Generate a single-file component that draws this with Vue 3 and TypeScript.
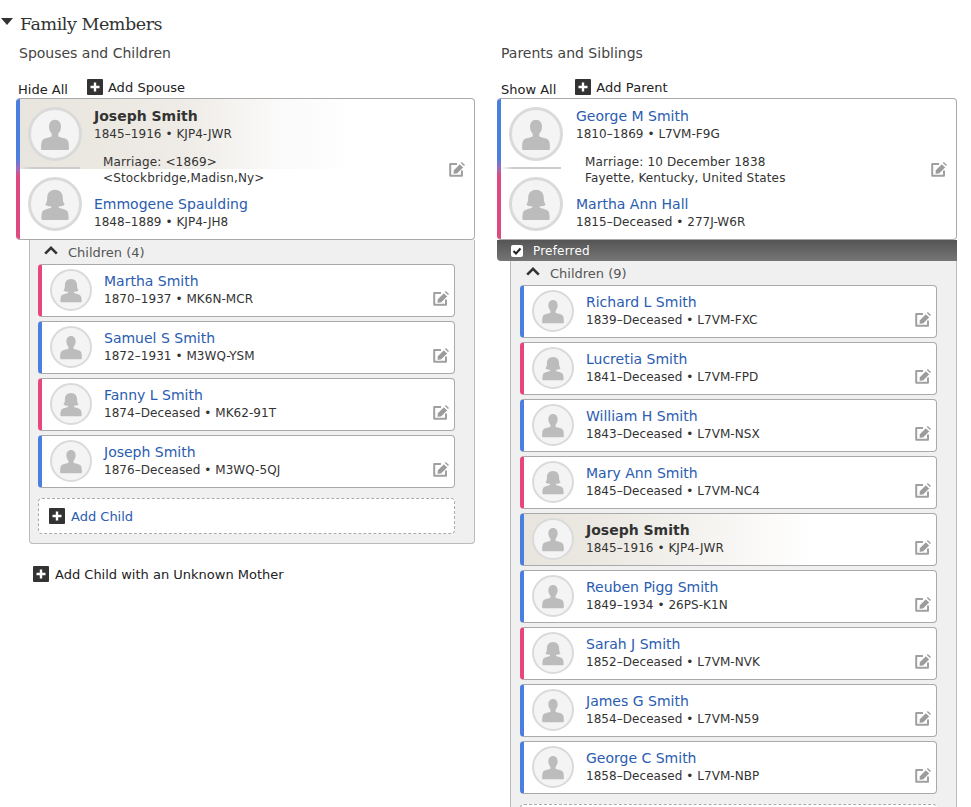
<script setup lang="ts">
interface Kid { name: string; info: string; sex: 'm' | 'f'; self?: boolean }
const leftKids: Kid[] = [
  { name: 'Martha Smith', info: '1870–1937 • MK6N-MCR', sex: 'f' },
  { name: 'Samuel S Smith', info: '1872–1931 • M3WQ-YSM', sex: 'm' },
  { name: 'Fanny L Smith', info: '1874–Deceased • MK62-91T', sex: 'f' },
  { name: 'Joseph Smith', info: '1876–Deceased • M3WQ-5QJ', sex: 'm' },
]
const rightKids: Kid[] = [
  { name: 'Richard L Smith', info: '1839–Deceased • L7VM-FXC', sex: 'm' },
  { name: 'Lucretia Smith', info: '1841–Deceased • L7VM-FPD', sex: 'f' },
  { name: 'William H Smith', info: '1843–Deceased • L7VM-NSX', sex: 'm' },
  { name: 'Mary Ann Smith', info: '1845–Deceased • L7VM-NC4', sex: 'f' },
  { name: 'Joseph Smith', info: '1845–1916 • KJP4-JWR', sex: 'm', self: true },
  { name: 'Reuben Pigg Smith', info: '1849–1934 • 26PS-K1N', sex: 'm' },
  { name: 'Sarah J Smith', info: '1852–Deceased • L7VM-NVK', sex: 'f' },
  { name: 'James G Smith', info: '1854–Deceased • L7VM-N59', sex: 'm' },
  { name: 'George C Smith', info: '1858–Deceased • L7VM-NBP', sex: 'm' },
]
const malePath = 'M12 2.500c-2.400 0-4 1.900-4 4.600 0 1.900.7 3.500 1.800 4.600v1.900c-2.500 1-6 1.200-6.600 3.200-.4 1.300-.5 3.400-.5 4.800 0 .6.3 1 .9 1h16.800c.6 0 .9-.4.9-1 0-1.400-.1-3.500-.5-4.800-.6-2-4.100-2.200-6.600-3.200v-1.900c1.100-1.100 1.800-2.700 1.800-4.600 0-2.700-1.600-4.600-4-4.600z'
const femalePath = 'M12 2.500c-3.400 0-5.200 2.400-5.200 5.400 0 2-.4 3.400-1.300 4.600 1 .8 2.500 1.100 4 1.100v.9c-2.400.9-5.500 1.100-6.100 3-.4 1.300-.5 3.200-.5 4.100 0 .6.3 1 .9 1h16.400c.6 0 .9-.4.9-1 0-.9-.1-2.800-.5-4.100-.6-1.900-3.700-2.100-6.100-3v-.9c1.500 0 3-.3 4-1.100-.9-1.200-1.300-2.600-1.300-4.600 0-3-1.800-5.400-5.200-5.400z'
</script>

<template>
  <div class="page">
    <h2 class="title"><span class="caret"></span>Family Members</h2>
    <div class="cols">
      <section class="col col-left">
        <h3 class="subhead">Spouses and Children</h3>
        <div class="actions">
          <span class="toggle">Hide All</span>
          <span class="add">
            <svg class="plus" viewBox="0 0 16 16"><rect width="16" height="16" rx="1" fill="#333" /><path d="M8 3.500v9M3.500 8h9" stroke="#fff" stroke-width="2.400" /></svg>
            Add Spouse
          </span>
        </div>
        <div class="couple">
          <div class="self-glow"></div>
          <div class="stripe"></div>
          <div class="rule"></div>
          <div class="avatars">
            <div class="avatar big"><svg viewBox="0 0 24 24"><path :d="malePath" /></svg></div>
            <div class="avatar big"><svg viewBox="0 0 24 24"><path :d="femalePath" /></svg></div>
          </div>
          <div class="couple-text">
            <div class="name self-name">Joseph Smith</div>
            <div class="info">1845–1916 • KJP4-JWR</div>
            <div class="marriage">Marriage: &lt;1869&gt;<br />&lt;Stockbridge,Madisn,Ny&gt;</div>
            <div class="name">Emmogene Spaulding</div>
            <div class="info">1848–1889 • KJP4-JH8</div>
          </div>
          <svg class="edit edit-couple" viewBox="0 0 16 16"><path d="M8 3H1.200v11.800H13V9.500" fill="none" stroke="#a0a0a0" stroke-width="2" stroke-linejoin="round" /><path d="M4.500 9.200 10.800 2.900l3.600 3.600-6.300 6.300-4 .5z" fill="#9c9c9c" stroke="#fff" stroke-width=".7" /><path d="M11.800 1.900l1-1 3.200 3.200-1 1z" fill="#9c9c9c" /></svg>
        </div>
        <div class="kids-panel left-panel">
          <div class="kids-head">
            <svg class="chev" viewBox="0 0 14 9"><path d="M1.200 7.700 7 1.900l5.800 5.800" fill="none" stroke="#333" stroke-width="2.600" /></svg>
            Children (4)
          </div>
          <div v-for="k in leftKids" :key="k.name + k.info" class="kid" :class="k.sex">
            <div class="avatar"><svg viewBox="0 0 24 24"><path :d="k.sex === 'm' ? malePath : femalePath" /></svg></div>
            <div class="kid-text">
              <div class="name">{{ k.name }}</div>
              <div class="info">{{ k.info }}</div>
            </div>
            <svg class="edit" viewBox="0 0 16 16"><path d="M8 3H1.200v11.800H13V9.500" fill="none" stroke="#a0a0a0" stroke-width="2" stroke-linejoin="round" /><path d="M4.500 9.200 10.800 2.900l3.600 3.600-6.300 6.300-4 .5z" fill="#9c9c9c" stroke="#fff" stroke-width=".7" /><path d="M11.800 1.900l1-1 3.200 3.200-1 1z" fill="#9c9c9c" /></svg>
          </div>
          <div class="add-child">
            <svg class="plus" viewBox="0 0 16 16"><rect width="16" height="16" rx="1" fill="#333" /><path d="M8 3.500v9M3.500 8h9" stroke="#fff" stroke-width="2.400" /></svg>
            <span class="link">Add Child</span>
          </div>
        </div>
        <div class="add unknown">
          <svg class="plus" viewBox="0 0 16 16"><rect width="16" height="16" rx="1" fill="#333" /><path d="M8 3.500v9M3.500 8h9" stroke="#fff" stroke-width="2.400" /></svg>
          Add Child with an Unknown Mother
        </div>
      </section>

      <section class="col col-right">
        <h3 class="subhead">Parents and Siblings</h3>
        <div class="actions">
          <span class="toggle">Show All</span>
          <span class="add">
            <svg class="plus" viewBox="0 0 16 16"><rect width="16" height="16" rx="1" fill="#333" /><path d="M8 3.500v9M3.500 8h9" stroke="#fff" stroke-width="2.400" /></svg>
            Add Parent
          </span>
        </div>
        <div class="couple parents">
          <div class="stripe"></div>
          <div class="rule"></div>
          <div class="avatars">
            <div class="avatar big"><svg viewBox="0 0 24 24"><path :d="malePath" /></svg></div>
            <div class="avatar big"><svg viewBox="0 0 24 24"><path :d="femalePath" /></svg></div>
          </div>
          <div class="couple-text">
            <div class="name">George M Smith</div>
            <div class="info">1810–1869 • L7VM-F9G</div>
            <div class="marriage">Marriage: 10 December 1838<br />Fayette, Kentucky, United States</div>
            <div class="name">Martha Ann Hall</div>
            <div class="info">1815–Deceased • 277J-W6R</div>
          </div>
          <svg class="edit edit-couple" viewBox="0 0 16 16"><path d="M8 3H1.200v11.800H13V9.500" fill="none" stroke="#a0a0a0" stroke-width="2" stroke-linejoin="round" /><path d="M4.500 9.200 10.800 2.900l3.600 3.600-6.300 6.300-4 .5z" fill="#9c9c9c" stroke="#fff" stroke-width=".7" /><path d="M11.800 1.900l1-1 3.200 3.200-1 1z" fill="#9c9c9c" /></svg>
        </div>
        <div class="preferred">
          <svg class="check" viewBox="0 0 12 12"><rect width="12" height="12" rx="2" fill="#fff" /><path d="M2.500 6 5 8.500 9.500 3.500" fill="none" stroke="#222" stroke-width="2" /></svg>
          Preferred
        </div>
        <div class="kids-panel right-panel">
          <div class="kids-head">
            <svg class="chev" viewBox="0 0 14 9"><path d="M1.200 7.700 7 1.900l5.800 5.800" fill="none" stroke="#333" stroke-width="2.600" /></svg>
            Children (9)
          </div>
          <div v-for="k in rightKids" :key="k.name + k.info" class="kid" :class="[k.sex, { self: k.self }]">
            <div class="avatar"><svg viewBox="0 0 24 24"><path :d="k.sex === 'm' ? malePath : femalePath" /></svg></div>
            <div class="kid-text">
              <div class="name" :class="{ 'self-name': k.self }">{{ k.name }}</div>
              <div class="info">{{ k.info }}</div>
            </div>
            <svg class="edit" viewBox="0 0 16 16"><path d="M8 3H1.200v11.800H13V9.500" fill="none" stroke="#a0a0a0" stroke-width="2" stroke-linejoin="round" /><path d="M4.500 9.200 10.800 2.900l3.600 3.600-6.300 6.300-4 .5z" fill="#9c9c9c" stroke="#fff" stroke-width=".7" /><path d="M11.800 1.900l1-1 3.200 3.200-1 1z" fill="#9c9c9c" /></svg>
          </div>
          <div class="add-child"></div>
        </div>
      </section>
    </div>
  </div>
</template>

<style scoped>
.page {
  width: 971px;
  height: 807px;
  overflow: hidden;
  background: #fff;
  font-family: "DejaVu Sans", Verdana, sans-serif;
  color: #333;
  box-sizing: border-box;
}
.title {
  margin: 0;
  height: 46px;
  padding-top: 2px;
  box-sizing: border-box;
  display: flex;
  align-items: center;
  font-family: "DejaVu Serif", serif;
  font-weight: 400;
  font-size: 17.5px;
  letter-spacing: -0.45px;
  line-height: 22px;
  color: #333;
}
.caret {
  width: 0;
  height: 0;
  margin: -5px 7px 0 1px;
  border-left: 6px solid transparent;
  border-right: 6px solid transparent;
  border-top: 7px solid #333;
}
.cols {
  display: flex;
  gap: 22px;
  padding-left: 16px;
}
.col {
  display: flex;
  flex-direction: column;
}
.col-left { width: 459px; }
.col-right { width: 460px; }
.subhead {
  margin: 0 0 0 3px;
  font-weight: 400;
  font-size: 14px;
  line-height: 14px;
  height: 14px;
  color: #444;
}
.col-right .subhead { margin-left: 4px; }
.actions {
  height: 31px;
  margin-top: 7px;
  padding: 12px 0 0 2px;
  box-sizing: border-box;
  display: flex;
  gap: 19px;
  font-size: 13px;
}
.col-right .actions { padding-left: 4px; }
.toggle {
  line-height: 16px;
  padding-top: 3px;
  color: #222;
}
.add {
  display: flex;
  align-items: center;
  gap: 6px;
  height: 16px;
  font-size: 13px;
  color: #222;
}
.actions .add { letter-spacing: 0.05px; gap: 5px; }
.plus {
  width: 16px;
  height: 16px;
  flex: none;
}
.couple {
  position: relative;
  display: flex;
  height: 142px;
  box-sizing: border-box;
  border: 1px solid #aaa;
  border-left: 0;
  border-radius: 4px;
  background: #fff;
  padding: 8px 0 0 12px;
  overflow: hidden;
}
.stripe {
  position: absolute;
  left: 0;
  top: 0;
  bottom: 0;
  width: 4px;
  background: linear-gradient(to bottom, #4a7fe0 0 42%, #a469b8 50%, #dd4a80 55% 100%);
}
.self-glow {
  position: absolute;
  left: 0;
  top: 0;
  width: 340px;
  height: 70px;
  background: linear-gradient(to right, #e8e5de 0, #efece7 50%, #fbfafa 78%, #fff 100%);
}
.rule {
  position: absolute;
  left: 4px;
  top: 68px;
  width: 60px;
  height: 2px;
  background: linear-gradient(to right, transparent, #ccc 20%);
}
.avatars {
  position: relative;
  display: flex;
  flex-direction: column;
  gap: 16px;
  width: 54px;
  flex: none;
}
.avatar {
  width: 42px;
  height: 42px;
  flex: none;
  box-sizing: border-box;
  border-radius: 50%;
  border: 2px solid #dadada;
  background: #f4f4f4;
  display: flex;
  align-items: center;
  justify-content: center;
}
.avatar svg {
  width: 28px;
  height: 28px;
}
.avatar path { fill: #bcbcbc; }
.avatar.big {
  width: 54px;
  height: 54px;
  border-width: 3px;
}
.avatar.big svg { width: 36px; height: 36px; }
.couple-text {
  position: relative;
  margin-left: 12px;
  flex: 1;
}
.parents .couple-text { margin-left: 13px; }
.name {
  font-size: 14px;
  line-height: 19px;
  color: #2a5cb0;
}
.self-name {
  font-weight: 700;
  color: #333;
}
.info {
  font-size: 12px;
  line-height: 17px;
  letter-spacing: 0.05px;
  color: #333;
}
.marriage {
  margin: 11px 0 9px 9px;
  font-size: 12px;
  line-height: 16px;
  letter-spacing: 0.15px;
  color: #333;
}
.edit {
  width: 16px;
  height: 16px;
  flex: none;
}
.edit-couple {
  position: relative;
  margin: 54px 9px 0 0;
}
.kids-panel {
  box-sizing: border-box;
  background: #f0f0f0;
  border: 1px solid #bbb;
  border-top: 0;
}
.left-panel {
  margin-left: 13px;
  height: 304px;
  padding: 0 19px 0 8px;
  border-radius: 0 0 4px 4px;
}
.right-panel {
  margin-left: 13px;
  height: 560px;
  padding: 0 19px 0 9px;
}
.kids-head {
  display: flex;
  align-items: center;
  gap: 10px;
  height: 24px;
  padding-left: 6px;
  font-size: 13px;
  color: #555;
}
.chev { width: 14px; height: 9px; margin-top: -4px; }
.kid {
  display: flex;
  height: 53px;
  box-sizing: border-box;
  margin-bottom: 4px;
  background: #fff;
  border: 1px solid #aaa;
  border-left-width: 4px;
  border-radius: 4px;
  padding: 4px 5px 0 8px;
}
.kid.m { border-left-color: #4a7fe0; }
.kid.f { border-left-color: #e8457e; }
.kid.self {
  background: linear-gradient(to right, #e8e5de 0, #ece9e3 20%, #fff 70%);
}
.kid-text {
  margin-left: 12px;
  flex: 1;
  padding-top: 3px;
}
.kid .edit { margin-top: 21px; }
.add-child {
  display: flex;
  align-items: center;
  gap: 6px;
  height: 36px;
  margin-top: 10px;
  padding-left: 10px;
  box-sizing: border-box;
  background: #fff;
  border: 1px dashed #aaa;
  border-radius: 4px;
  font-size: 13px;
}
.link { color: #2a5cb0; }
.unknown {
  margin: 22px 0 0 17px;
}
.preferred {
  display: flex;
  align-items: center;
  gap: 10px;
  height: 21px;
  padding-left: 14px;
  font-size: 12px;
  letter-spacing: 0.2px;
  color: #fff;
  background: linear-gradient(to bottom, #555 0, #757575 100%);
  border-radius: 0 0 0 4px;
}
.check { width: 12px; height: 12px; }
</style>
